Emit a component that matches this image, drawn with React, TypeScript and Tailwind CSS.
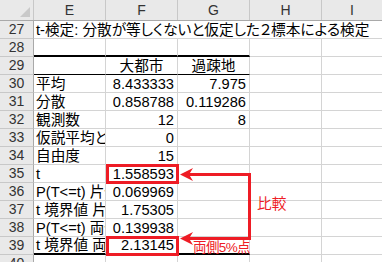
import React from 'react';

type Row = {
  n: number;
  e?: string;
  f?: string;
  g?: string;
  center?: boolean;
  bottom?: 'thick' | 'thin';
};

const rows: Row[] = [
  { n: 28, bottom: 'thick' },
  { n: 29, f: '大都市', g: '過疎地', center: true, bottom: 'thin' },
  { n: 30, e: '平均', f: '8.433333', g: '7.975' },
  { n: 31, e: '分散', f: '0.858788', g: '0.119286' },
  { n: 32, e: '観測数', f: '12', g: '8' },
  { n: 33, e: '仮説平均との差異', f: '0' },
  { n: 34, e: '自由度', f: '15' },
  { n: 35, e: 't', f: '1.558593' },
  { n: 36, e: 'P(T<=t) 片側', f: '0.069969' },
  { n: 37, e: 't 境界値 片側', f: '1.75305' },
  { n: 38, e: 'P(T<=t) 両側', f: '0.139938' },
  { n: 39, e: 't 境界値 両側', f: '2.13145', bottom: 'thick' },
  { n: 40 },
];

const bottomClass = (b?: 'thick' | 'thin') =>
  b === 'thick'
    ? 'border-b-2 border-b-black'
    : b === 'thin'
      ? 'border-b border-b-black'
      : 'border-b border-b-[#d4d4d4]';

const RowHead: React.FC<{ n: number }> = ({ n }) => (
  <div className="w-[34px] h-full shrink-0 flex items-center justify-center bg-[#e9e9e9] border-r border-r-[#a9a9a9] border-b border-b-[#c8c8c8] text-[#333] text-[14px]">
    {n}
  </div>
);

const Cell: React.FC<{
  w: string;
  text?: string;
  align?: 'left' | 'right' | 'center';
  bottom?: string;
}> = ({ w, text, align = 'left', bottom = 'border-b border-b-[#d4d4d4]' }) => (
  <div
    className={`${w} h-full shrink-0 flex items-center overflow-hidden whitespace-nowrap border-r border-r-[#d4d4d4] ${bottom} ${
      align === 'right' ? 'justify-end pr-[3px]' : align === 'center' ? 'justify-center' : 'pl-[2px]'
    }`}
  >
    {text}
  </div>
);

export default function App() {
  return (
    <div className="relative w-[382px] h-[262px] overflow-hidden bg-white text-black font-['Liberation_Sans','Noto_Sans_CJK_JP',sans-serif] [font-feature-settings:'palt'] text-[14.67px]">
      {/* column headers */}
      <div className="flex h-[21px] bg-[#e9e9e9] border-b border-b-[#a9a9a9] text-[#333] text-[14px]">
        <div className="relative w-[34px] shrink-0 border-r border-r-[#c8c8c8]">
          <svg className="absolute right-[3px] bottom-[3px]" width="10" height="10" viewBox="0 0 10 10">
            <polygon points="10,0 10,10 0,10" fill="#c9c9c9" />
          </svg>
        </div>
        {['E', 'F', 'G', 'H'].map((c) => (
          <div key={c} className="w-[72px] shrink-0 flex items-center justify-center border-r border-r-[#c8c8c8]">
            {c}
          </div>
        ))}
        <div className="flex-1 flex items-center justify-center">I</div>
      </div>

      {/* row 27: title overflows across cells */}
      <div className="flex h-[18px]">
        <RowHead n={27} />
        <div className="flex-1 h-full flex items-center pl-[2px] whitespace-nowrap border-b border-b-[#d4d4d4]">
          t-検定: 分散が等しくないと仮定した２標本による検定
        </div>
      </div>

      {rows.map((r) => {
        const b = bottomClass(r.bottom);
        return (
          <div key={r.n} className="flex h-[18px]">
            <RowHead n={r.n} />
            <Cell w="w-[72px]" text={r.e} bottom={b} />
            <Cell w="w-[72px]" text={r.f} align={r.center ? 'center' : 'right'} bottom={b} />
            <Cell w="w-[72px]" text={r.g} align={r.center ? 'center' : 'right'} bottom={b} />
            <Cell w="w-[72px]" />
            <Cell w="w-[72px]" />
          </div>
        );
      })}

      {/* annotations */}
      <div className="absolute left-[106px] top-[164px] w-[73px] h-[20px] border-[3px] border-[#ee1c25]" />
      <div className="absolute left-[106px] top-[236px] w-[73px] h-[20px] border-[3px] border-[#ee1c25]" />
      <svg className="absolute left-0 top-0 pointer-events-none" width="382" height="262">
        <path d="M188 174.5 H249.5 V238.5 H188" fill="none" stroke="#ee1c25" strokeWidth="3" />
        <polygon points="180,174.5 193,168 189,174.5 193,181" fill="#ee1c25" />
        <polygon points="180,238.5 193,232 189,238.5 193,245" fill="#ee1c25" />
      </svg>
      <div className="absolute left-[257px] top-[197px] text-[#ee1c25] leading-none">比較</div>
      <div className="absolute left-[193px] top-[241px] text-[#ee1c25] text-[13.5px] leading-none tracking-[-0.6px]">両側5%点</div>
    </div>
  );
}
